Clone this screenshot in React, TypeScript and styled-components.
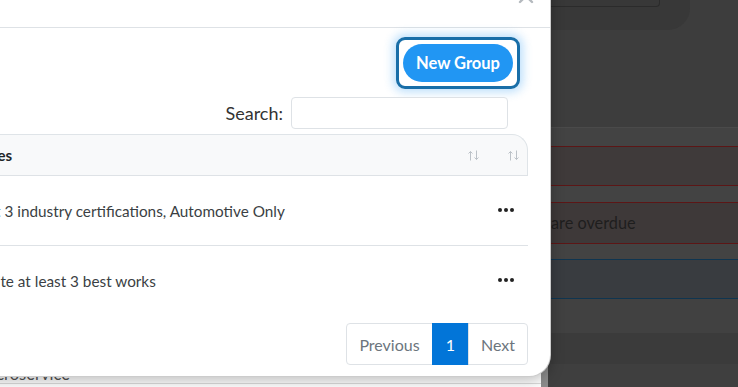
import styled, { createGlobalStyle } from "styled-components";

const GlobalStyle = createGlobalStyle`
    html, body {
        margin: 0;
        padding: 0;
    }
    body {
        font-family: Lato, "Liberation Sans", sans-serif;
        background: #3d3d3d;
    }
    * {
        box-sizing: border-box;
    }
`;

const Stage = styled.div`
    position: relative;
    width: 738px;
    height: 387px;
    overflow: hidden;
    background: #3d3d3d;
`;

/* ---------- dimmed page behind the dialog ---------- */

const BackPage = styled.div`
    display: grid;
    grid-template-columns: 548px 1fr;
    height: 100%;
`;

const LeftPanel = styled.div`
    background: #fff;
    border-right: 7px solid #8c8c8c;
    padding-top: 355px;
    overflow: hidden;
`;

const BackRow = styled.div<{ $divider?: boolean }>`
    display: grid;
    grid-template-columns: 138px 1fr;
    align-items: ${({ $divider }) => ($divider ? "end" : "start")};
    height: ${({ $divider }) => ($divider ? "29px" : "20px")};
    margin-left: -23px;
    padding: ${({ $divider }) => ($divider ? "0" : "1px 0 0")};
    border-bottom: ${({ $divider }) => ($divider ? "1px solid #dcdcdc" : "none")};
    font-size: 16.5px;
    line-height: 18px;
    color: #555;
    white-space: nowrap;
`;

const RightColumn = styled.div`
    display: flex;
    flex-direction: column;
`;

const TopCard = styled.div`
    height: 30px;
    margin-right: 48px;
    padding-right: 30px;
    background: #383838;
    border-bottom-right-radius: 22px;
`;

const CardInput = styled.div`
    height: 7px;
    border-right: 1px solid #2b2b2b;
    border-bottom: 1px solid #2b2b2b;
    border-bottom-right-radius: 4px;
`;

const Band = styled.div<{ $h: number; $bg: string; $line?: string }>`
    height: ${({ $h }) => $h}px;
    flex-shrink: 0;
    background: ${({ $bg }) => $bg};
    border-top: ${({ $line }) => ($line ? `1px solid ${$line}` : "none")};
    display: flex;
    align-items: center;
    padding: 0 0 2px 3px;
    font-size: 16.3px;
    color: #1e1e1e;
    white-space: nowrap;
`;

/* ---------- dialog ---------- */

const Modal = styled.div`
    position: absolute;
    top: -30px;
    left: -60px;
    width: 611px;
    height: 407px;
    background: #fff;
    border: 1px solid rgba(0, 0, 0, 0.2);
    border-radius: 22px;
    box-shadow: 0 4px 14px rgba(0, 0, 0, 0.25);
    display: flex;
    flex-direction: column;
    overflow: hidden;
`;

const ModalHeader = styled.div`
    height: 57px;
    flex-shrink: 0;
    border-bottom: 1px solid #dee2e6;
    display: flex;
    justify-content: flex-end;
    align-items: flex-start;
`;

const CloseButton = styled.button`
    margin: 17px 16px 0 0;
    padding: 0;
    border: none;
    background: none;
    width: 16px;
    height: 16px;
    display: flex;
`;

const ModalBody = styled.div`
    display: flex;
    flex-direction: column;
    align-items: flex-end;
    padding: 9px 0 0 15px;
`;

const FocusRing = styled.div`
    margin-right: 30px;
    padding: 4px;
    border: 3px solid #186ea8;
    border-radius: 9px;
    box-shadow: 0 0 10px 3px rgba(33, 150, 243, 0.3);
`;

const PrimaryButton = styled.button`
    width: 110px;
    height: 38px;
    border: none;
    border-radius: 19px;
    background: #2196f3;
    color: #fff;
    font-family: inherit;
    font-size: 16.5px;
    font-weight: 700;
    display: block;
`;

const SearchRow = styled.label`
    margin: 8px 42px 0 0;
    display: flex;
    align-items: center;
    gap: 8px;
    font-size: 18px;
    color: #333;
`;

const SearchInput = styled.input`
    width: 217px;
    height: 32px;
    border: 1px solid #dee2e6;
    border-radius: 4px;
    outline: none;
`;

const Table = styled.div`
    align-self: stretch;
    margin: 5px 22px 0 0;
    display: flex;
    flex-direction: column;
`;

const HeadRow = styled.div`
    display: grid;
    grid-template-columns: 1fr 40px;
    height: 42px;
    background: #f8f9fa;
    border-top: 1px solid #dfe4e8;
    border-right: 1px solid #dfe4e8;
    border-bottom: 1px solid #dee2e6;
    border-top-right-radius: 16px;
`;

const HeadCell = styled.div<{ $end?: boolean }>`
    display: flex;
    align-items: center;
    justify-content: ${({ $end }) => ($end ? "flex-end" : "space-between")};
    padding: ${({ $end }) => ($end ? "0 7px 0 0" : "0 7px 0 20px")};
    font-size: 15px;
    font-weight: 700;
    color: #212529;
`;

const BodyRow = styled.div<{ $last?: boolean }>`
    display: grid;
    grid-template-columns: 1fr 40px;
    height: 70px;
    border-bottom: ${({ $last }) => ($last ? "none" : "1px solid #dee2e6")};
`;

const Cell = styled.div`
    display: flex;
    align-items: center;
    padding-left: 20px;
    font-size: 15.3px;
    color: #3b3f44;
    white-space: nowrap;
`;

const ActionCell = styled.div`
    display: flex;
    align-items: center;
    justify-content: center;
    padding-right: 4px;
    padding-bottom: 2px;
`;

const Pagination = styled.div`
    margin: 7px 22px 0 0;
    display: flex;
    height: 42px;
`;

const PageItem = styled.div<{ $active?: boolean; $w: number }>`
    display: flex;
    align-items: center;
    justify-content: center;
    width: ${({ $w }) => $w}px;
    font-size: 16px;
    color: ${({ $active }) => ($active ? "#fff" : "#6c757d")};
    background: ${({ $active }) => ($active ? "#0275d8" : "#fff")};
    border: 1px solid ${({ $active }) => ($active ? "#0275d8" : "#dee2e6")};
    margin-left: -1px;

    &:first-child {
        border-radius: 4px 0 0 4px;
    }
    &:last-child {
        border-radius: 0 4px 4px 0;
    }
`;

const SortIcon = () => (
    <svg width="13" height="11" viewBox="0 0 13 11" fill="none" stroke="#bcc2c8" strokeWidth="1">
        <path d="M3.5 1.5v9M1.5 3.5l2-2 2 2" />
        <path d="M9.5 0.5v9M7.5 7.5l2 2 2-2" />
    </svg>
);

const Dots = () => (
    <svg width="16" height="4" viewBox="0 0 16 4" fill="#222">
        <circle cx="2" cy="2" r="2" />
        <circle cx="8" cy="2" r="2" />
        <circle cx="14" cy="2" r="2" />
    </svg>
);

const rules = [
    "Get 3 industry certifications, Automotive Only",
    "Write at least 3 best works",
];

const App = () => {
    return (
        <>
            <GlobalStyle />
            <Stage>
                <BackPage>
                    <LeftPanel>
                        <BackRow $divider>
                            <span>Microservice</span>
                            <span />
                        </BackRow>
                        <BackRow>
                            <span />
                            <span>Primary tools and stack</span>
                        </BackRow>
                    </LeftPanel>
                    <RightColumn>
                        <TopCard>
                            <CardInput />
                        </TopCard>
                        <Band $h={97} $bg="#3d3d3d" />
                        <Band $h={19} $bg="#434343" $line="#4a4a4a" />
                        <Band $h={39} $bg="#3f3a3a" $line="#5c1616" />
                        <Band $h={17} $bg="#434343" $line="#5c1616" />
                        <Band $h={41} $bg="#3e3939" $line="#5c1616">
                            are overdue
                        </Band>
                        <Band $h={16} $bg="#434343" $line="#5c1616" />
                        <Band $h={39} $bg="#393c40" $line="#0f3550" />
                        <Band $h={35} $bg="#414141" $line="#0f3550" />
                        <Band $h={31} $bg="#3b3b3b" />
                        <Band $h={23} $bg="#3f3f3f" />
                    </RightColumn>
                </BackPage>

                <Modal>
                    <ModalHeader>
                        <CloseButton aria-label="Close">
                            <svg width="16" height="16" viewBox="0 0 16 16" stroke="#b4b9be" strokeWidth="2.4" strokeLinecap="round">
                                <path d="M2 2l12 12M14 2L2 14" />
                            </svg>
                        </CloseButton>
                    </ModalHeader>
                    <ModalBody>
                        <FocusRing>
                            <PrimaryButton>New Group</PrimaryButton>
                        </FocusRing>
                        <SearchRow>
                            Search:
                            <SearchInput type="search" />
                        </SearchRow>
                        <Table>
                            <HeadRow>
                                <HeadCell>
                                    Rules
                                    <SortIcon />
                                </HeadCell>
                                <HeadCell $end>
                                    <SortIcon />
                                </HeadCell>
                            </HeadRow>
                            {rules.map((rule, i) => (
                                <BodyRow key={rule} $last={i === rules.length - 1}>
                                    <Cell>{rule}</Cell>
                                    <ActionCell>
                                        <Dots />
                                    </ActionCell>
                                </BodyRow>
                            ))}
                        </Table>
                        <Pagination>
                            <PageItem $w={87}>Previous</PageItem>
                            <PageItem $w={37} $active>
                                1
                            </PageItem>
                            <PageItem $w={60}>Next</PageItem>
                        </Pagination>
                    </ModalBody>
                </Modal>
            </Stage>
        </>
    );
};

export default App;
